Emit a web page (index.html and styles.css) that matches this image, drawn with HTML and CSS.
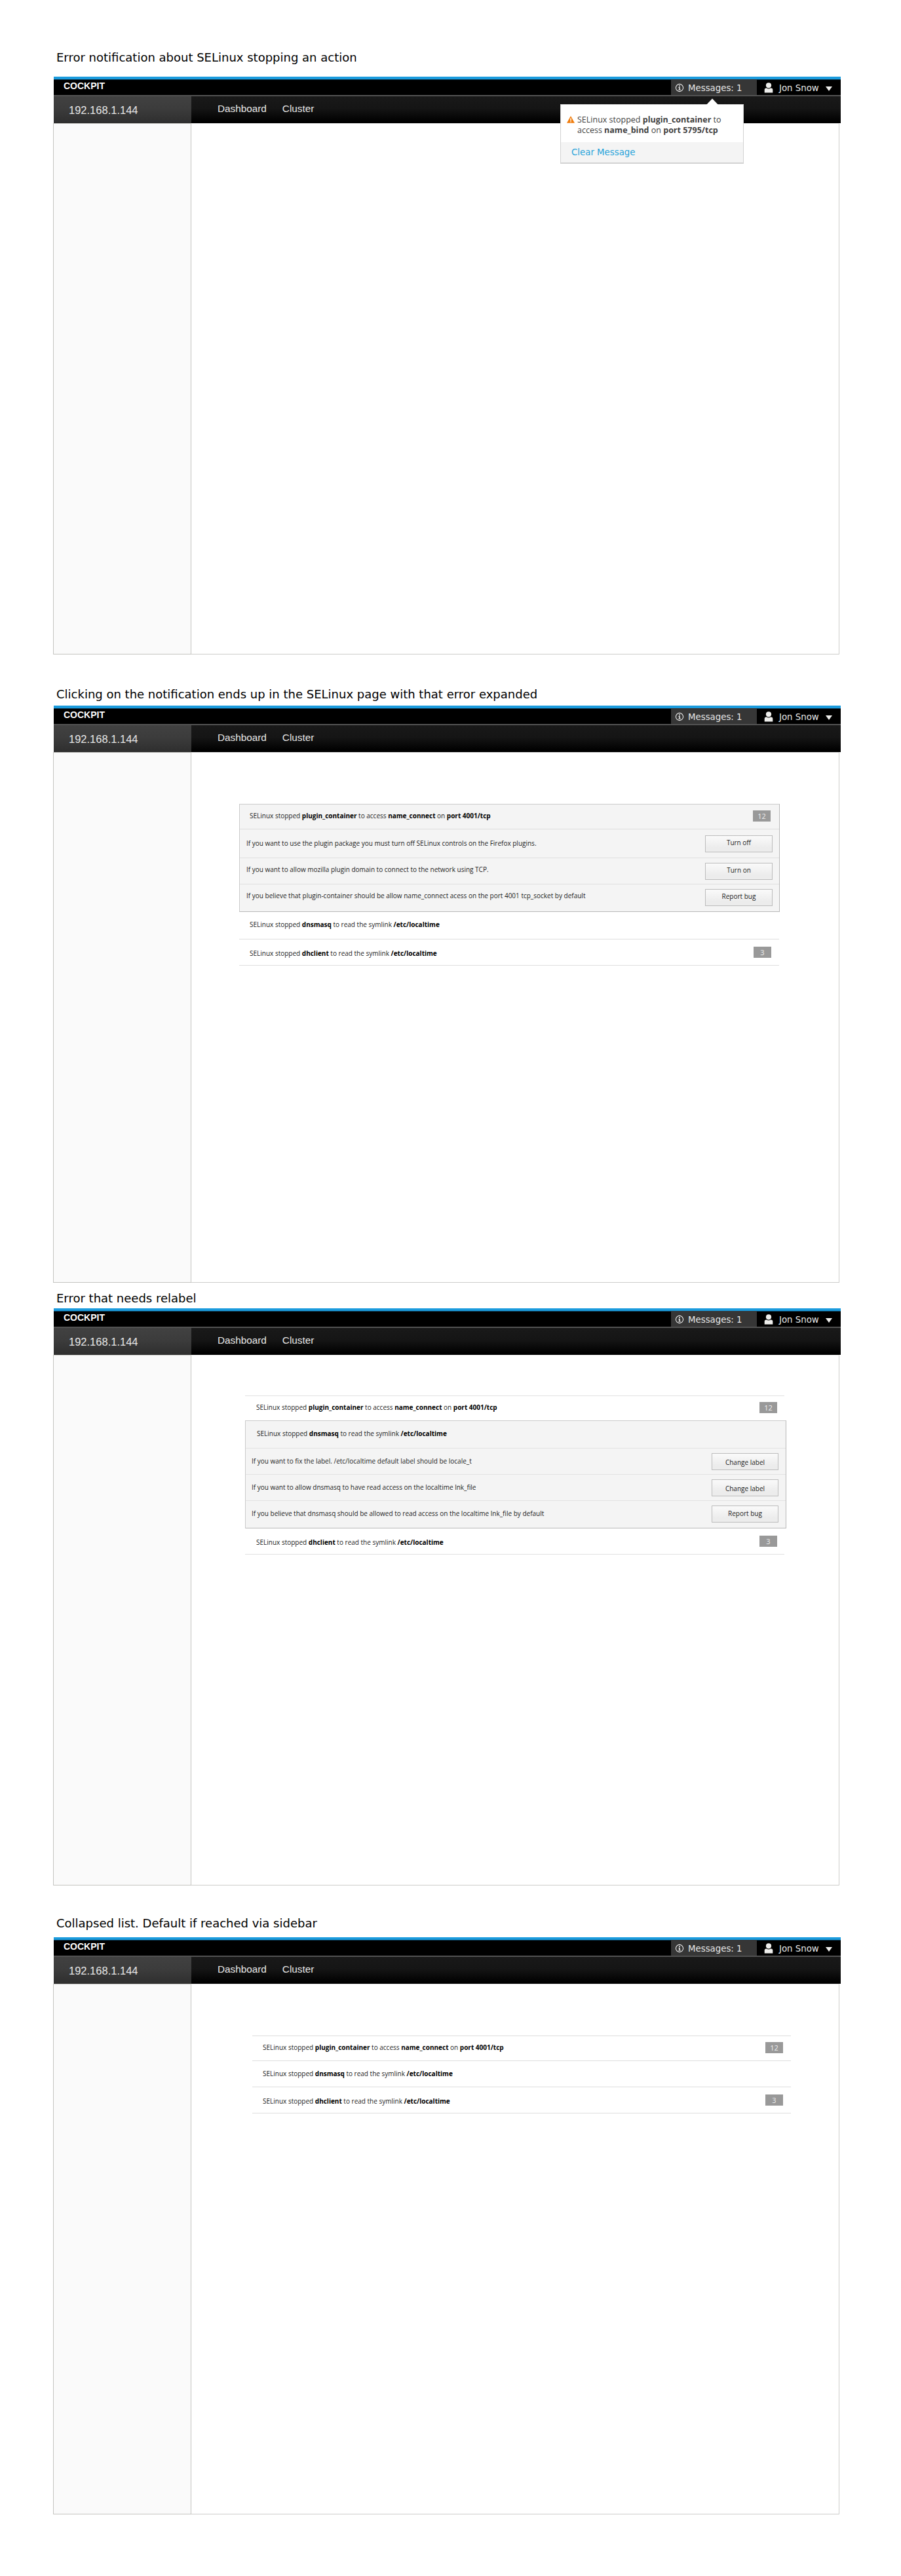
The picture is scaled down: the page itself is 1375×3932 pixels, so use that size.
FILE: index.html
```
<!DOCTYPE html>
<html lang="en">
<head>
<meta charset="utf-8">
<title>Cockpit SELinux notifications</title>
<link rel="stylesheet" href="styles.css">
</head>
<body>
<svg width="0" height="0" class="defs" aria-hidden="true">
  <symbol id="info" viewBox="0 0 14 14"><circle cx="7" cy="7" r="5.6" fill="none" stroke="#eee" stroke-width="1.1"/><circle cx="7" cy="4.3" r="1" fill="#eee"/><path d="M5.4 6h2.4v3.5h.9v.9H5.4v-.9h.9V6.9h-.9z" fill="#eee"/></symbol>
  <symbol id="user" viewBox="0 0 14 16"><circle cx="7" cy="4.3" r="4.1" fill="#eeeeec"/><path d="M.7 15.4v-4.2q0-2.6 2.6-2.6h.8q2.900 1.700 5.800 0h.8q2.600 0 2.600 2.600v4.200z" fill="#eeeeec"/></symbol>
  <symbol id="caret" viewBox="0 0 10 7"><path d="M0 0h10L5 7z" fill="#eeeeec"/></symbol>
</svg>

<section class="screen screen-notice">
  <h2 class="caption">Error notification about SELinux stopping an action</h2>
  <header class="topbar">
    <span class="brand">COCKPIT</span>
    <div class="messages"><svg class="i-info"><use href="#info"/></svg><span>Messages: 1</span>
      <div class="popover">
        <svg class="arrow" viewBox="0 0 20 11"><path d="M0 11L10 .5 20 11z" fill="#fff"/></svg>
        <div class="notice">
          <svg class="warn" viewBox="0 0 12 11"><path d="M6 0l6 10.700H0z" fill="#f07c0c"/><path d="M5.300 3.500h1.500v4H5.300zM5.300 8.200h1.500v1.300H5.300z" fill="#fff"/></svg>
          <p>SELinux stopped <b>plugin_container</b> to<br>access <b>name_bind</b> on <b>port 5795/tcp</b></p>
        </div>
        <div class="clear"><a>Clear Message</a></div>
      </div>
    </div>
    <div class="account"><svg class="i-user"><use href="#user"/></svg><span>Jon Snow</span><svg class="i-caret"><use href="#caret"/></svg></div>
  </header>
  <nav class="nav"><span class="host">192.168.1.144</span><a>Dashboard</a><a>Cluster</a></nav>
  <div class="body"><aside class="sidebar"></aside><main class="main"></main></div>
</section>

<section class="screen screen-expanded">
  <h2 class="caption">Clicking on the notification ends up in the SELinux page with that error expanded</h2>
  <header class="topbar">
    <span class="brand">COCKPIT</span>
    <div class="messages"><svg class="i-info"><use href="#info"/></svg><span>Messages: 1</span></div>
    <div class="account"><svg class="i-user"><use href="#user"/></svg><span>Jon Snow</span><svg class="i-caret"><use href="#caret"/></svg></div>
  </header>
  <nav class="nav"><span class="host">192.168.1.144</span><a>Dashboard</a><a>Cluster</a></nav>
  <div class="body"><aside class="sidebar"></aside>
    <main class="main">
      <div class="list">
        <div class="panel">
          <div class="row head"><p>SELinux stopped <b>plugin_container</b> to access <b>name_connect</b> on <b>port 4001/tcp</b></p><span class="badge">12</span></div>
          <div class="row fix tall"><p>If you want to use the plugin package you must turn off SELinux controls on the Firefox plugins.</p><button>Turn off</button></div>
          <div class="row fix"><p>If you want to allow mozilla plugin domain to connect to the network using TCP.</p><button>Turn on</button></div>
          <div class="row fix last"><p>If you believe that plugin-container should be allow name_connect acess on the port 4001 tcp_socket by default</p><button>Report bug</button></div>
        </div>
        <div class="row middle"><p>SELinux stopped <b>dnsmasq</b> to read the symlink <b>/etc/localtime</b></p></div>
        <div class="row end"><p>SELinux stopped <b>dhclient</b> to read the symlink <b>/etc/localtime</b></p><span class="badge">3</span></div>
      </div>
    </main>
  </div>
</section>

<section class="screen screen-relabel">
  <h2 class="caption">Error that needs relabel</h2>
  <header class="topbar">
    <span class="brand">COCKPIT</span>
    <div class="messages"><svg class="i-info"><use href="#info"/></svg><span>Messages: 1</span></div>
    <div class="account"><svg class="i-user"><use href="#user"/></svg><span>Jon Snow</span><svg class="i-caret"><use href="#caret"/></svg></div>
  </header>
  <nav class="nav"><span class="host">192.168.1.144</span><a>Dashboard</a><a>Cluster</a></nav>
  <div class="body"><aside class="sidebar"></aside>
    <main class="main">
      <div class="list">
        <div class="row head first"><p>SELinux stopped <b>plugin_container</b> to access <b>name_connect</b> on <b>port 4001/tcp</b></p><span class="badge">12</span></div>
        <div class="panel">
          <div class="row middle"><p>SELinux stopped <b>dnsmasq</b> to read the symlink <b>/etc/localtime</b></p></div>
          <div class="row fix"><p>If you want to fix the label. /etc/localtime default label should be locale_t</p><button>Change label</button></div>
          <div class="row fix"><p>If you want to allow dnsmasq to have read access on the localtime lnk_file</p><button>Change label</button></div>
          <div class="row fix last"><p>If you believe that dnsmasq should be allowed to read access on the localtime lnk_file by default</p><button>Report bug</button></div>
        </div>
        <div class="row end"><p>SELinux stopped <b>dhclient</b> to read the symlink <b>/etc/localtime</b></p><span class="badge">3</span></div>
      </div>
    </main>
  </div>
</section>

<section class="screen screen-collapsed">
  <h2 class="caption">Collapsed list. Default if reached via sidebar</h2>
  <header class="topbar">
    <span class="brand">COCKPIT</span>
    <div class="messages"><svg class="i-info"><use href="#info"/></svg><span>Messages: 1</span></div>
    <div class="account"><svg class="i-user"><use href="#user"/></svg><span>Jon Snow</span><svg class="i-caret"><use href="#caret"/></svg></div>
  </header>
  <nav class="nav"><span class="host">192.168.1.144</span><a>Dashboard</a><a>Cluster</a></nav>
  <div class="body"><aside class="sidebar"></aside>
    <main class="main">
      <div class="list">
        <div class="row head first"><p>SELinux stopped <b>plugin_container</b> to access <b>name_connect</b> on <b>port 4001/tcp</b></p><span class="badge">12</span></div>
        <div class="row middle"><p>SELinux stopped <b>dnsmasq</b> to read the symlink <b>/etc/localtime</b></p></div>
        <div class="row end"><p>SELinux stopped <b>dhclient</b> to read the symlink <b>/etc/localtime</b></p><span class="badge">3</span></div>
      </div>
    </main>
  </div>
</section>
</body>
</html>
```
FILE: styles.css
```
* { box-sizing: border-box; }
body { margin: 0; background: #fff; min-height: 3932px; font: 10px/14px "Open Sans", "Noto Sans", sans-serif; color: #1c1c1c; }
p, h2 { margin: 0; }
svg { display: block; flex: none; }
.defs { position: absolute; }

.screen { width: 1201px; margin-left: 82px; }
.caption { margin-left: 4px; font: 400 18px/22px "DejaVu Sans", sans-serif; color: #000; white-space: nowrap; }
.screen-notice { padding-top: 77px; }
.screen-notice .caption { margin-bottom: 18px; }
.screen-expanded { padding-top: 50px; }
.screen-expanded .caption { margin-bottom: 6px; }
.screen-relabel { padding-top: 13px; }
.screen-relabel .caption { margin-bottom: 4px; }
.screen-collapsed { padding-top: 47px; }
.screen-collapsed .caption { margin-bottom: 10px; }

/* Top bar */
.topbar { display: flex; height: 30px; background: #000; border-top: 4px solid #1b9bdd; border-bottom: 2px solid #525252; box-shadow: inset 0 1px #0d3d57; }
.brand { padding-left: 15px; font: 700 14px/20px "Liberation Sans", Arial, sans-serif; color: #fff; margin-right: auto; }
.messages, .account { display: flex; font: 13.33px/24px "DejaVu Sans", sans-serif; color: #e6e6e6; }
.messages { position: relative; width: 131px; padding-left: 6px; background: #363636; }
.messages > span { margin-left: 6px; line-height: 28px; height: 24px; }
.i-info { width: 14px; height: 14px; margin-top: 6px; }
.account { width: 128px; padding-left: 11px; }
.account > span { width: 71px; margin-left: 9px; line-height: 28px; height: 24px; }
.i-user { width: 14px; height: 16px; margin-top: 5px; }
.i-caret { width: 10px; height: 7px; margin-top: 11px; }

/* Navigation */
.nav { display: flex; height: 41px; background: linear-gradient(#191919, #151515 45%, #000 95%); color: #e8e8e8; font: 15.3px/37px "Liberation Sans", Arial, sans-serif; }
.host { width: 210px; padding-left: 23px; margin-right: 40px; background: linear-gradient(#414141, #3c3c3c 45%, #2e2e2e); font-size: 16.5px; line-height: 42px; }
.nav a { margin-right: 24px; }

/* Content area */
.body { display: flex; width: 1200px; height: 810px; margin-left: -1px; }
.screen-notice .body { height: 811px; }
.sidebar { width: 211px; background: #fafafa; border: 1px solid #c4c4c0; }
.main { width: 989px; border: solid #ccccca; border-width: 1px 1px 1px 0; border-top-color: #e4e4e4; }

/* Notification popover */
.popover { position: absolute; z-index: 2; left: -169px; top: 38px; width: 280px; height: 91px; background: #fff; border: 1px solid #d2d2d2; border-bottom-width: 2px; }
.arrow { position: absolute; left: 221px; top: -10px; width: 20px; height: 11px; }
.notice { display: flex; height: 57px; padding: 15px 0 0 9px; font: 12.5px/16px "Open Sans", "Noto Sans", sans-serif; color: #3f3f3f; white-space: nowrap; }
.warn { width: 12px; height: 11px; margin: 2px 4px 0 0; }
.clear { height: 31px; padding-left: 16px; background: #f4f4f4; line-height: 32px; color: #27a3da; }

/* Error list */
.list { width: 824px; margin: 78px 0 0 73px; white-space: nowrap; }
.panel { width: 825px; height: 165px; background: #f4f4f4; border: 1px solid #b8b8b8; border-top-color: #cbcbcb; border-left-color: #cbcbcb; }
.row { display: flex; align-items: flex-start; justify-content: space-between; height: 40px; padding: 0 12px 0 16px; border-bottom: 1px solid #dedede; }
.row b { color: #000; }
.panel .row { padding: 0 13px 0 15px; }
.head { height: 38px; }
.head p { margin-top: 10px; }
.head .badge { margin-top: 9px; }
.first { height: 39px; border-top: 1px solid #dedede; }
.middle { height: 42px; }
.middle p { margin-top: 12px; }
.end p { margin-top: 14px; }
.end .badge { margin-top: 11px; }
.panel .fix { padding: 0 10px; }
.fix p { margin-top: 10px; }
.fix.tall { height: 44px; }
.fix.tall p { margin-top: 14px; }
.fix.tall button { margin-top: 9px; }
.fix.last { height: 41px; border-bottom: 0; }
.badge { width: 27px; height: 17px; background: #999; font: 11px/17px "Open Sans", "Noto Sans", sans-serif; color: #eee; text-align: center; }
button { width: 103px; height: 26px; margin: 7px 0 0; padding: 0 0 4px; border: 1px solid #bcbcbc; border-radius: 0; background: linear-gradient(#fafafa, #ececec 75%); font: 10px/14px "Open Sans", "Noto Sans", sans-serif; color: #1c1c1c; text-align: center; }

.screen-relabel .list { width: 823px; margin: 61px 0 0 82px; }
.screen-relabel .panel { width: 826px; }
.screen-relabel .row { padding-left: 17px; padding-right: 11px; border-color: #e2e2e2; }
.screen-relabel .first { height: 38px; border-bottom: 0; }
.screen-relabel .panel .fix { padding: 0 11px 0 9px; }
.screen-relabel .fix p { margin-top: 12px; }
.screen-relabel button { padding: 2px 0 0; width: 102px; }
.screen-relabel .last button { padding: 0 0 3px; }

.screen-collapsed .list { width: 822px; margin-left: 93px; }
.screen-collapsed .middle { height: 40px; }
```
